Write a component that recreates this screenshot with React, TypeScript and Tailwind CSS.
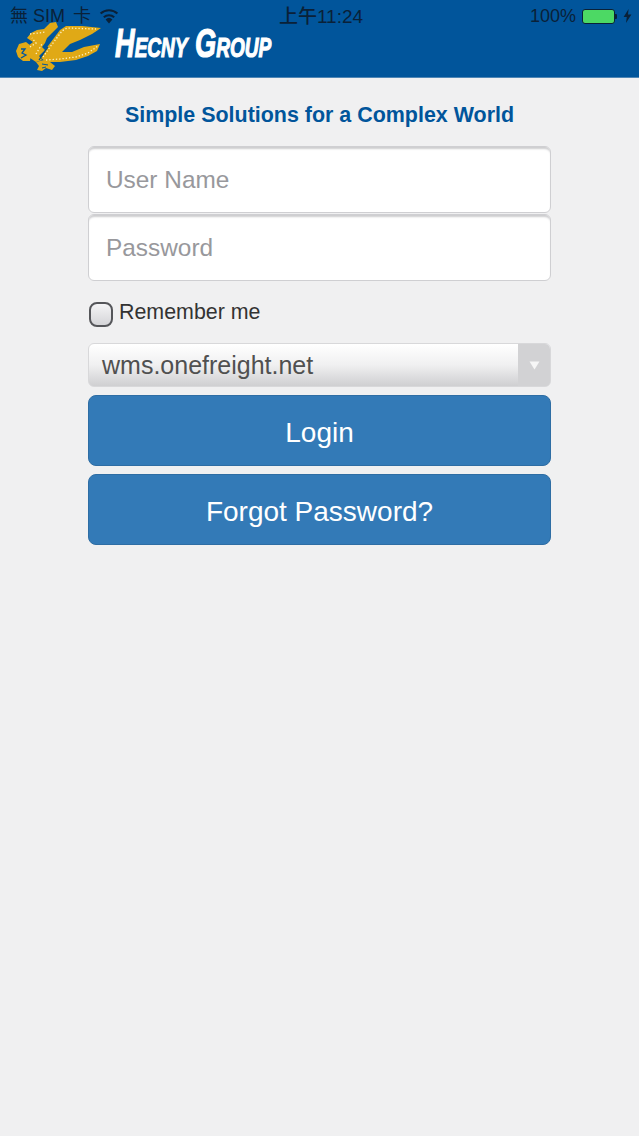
import React from 'react';

const sans = 'font-["Liberation_Sans",Arial,"Noto_Sans_CJK_TC",sans-serif]';

// coordinates are page pixels, the svg sits at the header's top left corner
const DragonLogo = () => (
  <svg width="110" height="77" viewBox="0 0 110 77" className="absolute left-0 top-0">
    {/* head and neck */}
    <path
      d="M27 38 L31 33 L37 30 L44 29 L50 23 L56 22 L58 27 L52 33 L47 38 L45 43 L42 47 L45 50 L39 56 L42 60 L36 62 L30 58 L29 52 L24 50 L28 46 L33 42 Z"
      fill="#e0a916"
    />
    {/* left claw */}
    <path
      d="M19 44 L26 42 L31 46 L28 50 L31 54 L30 61 L23 61 L18 57 L16 51 Z"
      fill="#e0a916"
    />
    <path d="M21 49 L25 49 L22 53 L26 55 L21 58" fill="none" stroke="#01559b" strokeWidth="1.3" />
    {/* wing and tail */}
    <path
      d="M41 58 L48 46 L60 30 L66 26 L82 26 L101 28 L92 34 L80 40 L70 44 L62 52 L72 52 L84 47 L100 44 L97 51 L88 56 L76 60 L60 62 L46 62 Z"
      fill="#e0a916"
    />
    {/* bottom claw */}
    <path
      d="M36 62 L44 60 L50 62 L55 66 L52 70 L46 68 L42 71 L37 70 L39 66 Z"
      fill="#e0a916"
    />
    <path d="M42 64 L48 65 M42 68 L46 67" fill="none" stroke="#01559b" strokeWidth="1" />
    {/* bead outline */}
    <path
      d="M43 57 L50 47 L62 31 L67 28 L96 29 M46 60 L60 59 L76 57 L88 53 L98 46 M30 34 L46 32 M30 47 L36 43 L32 38 M36 54 L42 44"
      fill="none"
      stroke="#fff3c4"
      strokeWidth="1.3"
      strokeDasharray="1.3 2"
    />
    <path d="M39 60 L48 47" fill="none" stroke="#01467f" strokeWidth="1.2" />
  </svg>
);

const WifiIcon = () => (
  <svg width="20" height="15" viewBox="0 0 20 15" className="ml-[8px]">
    <path d="M10 14.5 L6.6 10.4 A5 5 0 0 1 13.4 10.4 Z" fill="#0a2138" />
    <path d="M4.8 8.2 A8 8 0 0 1 15.2 8.2" fill="none" stroke="#0a2138" strokeWidth="2.1" />
    <path d="M1.6 4.6 A12.4 12.4 0 0 1 18.4 4.6" fill="none" stroke="#0a2138" strokeWidth="2.1" />
  </svg>
);

const StatusBar = () => (
  <div className="absolute inset-x-0 top-0 flex h-[32px] items-center justify-between pl-[10px] pr-[7px] text-[18px] leading-none text-[#0a2138]">
    <div className="flex w-[200px] items-center">
      <span>無</span>
      <span className="ml-[5px]">SIM</span>
      <span className="ml-[8px]">卡</span>
      <WifiIcon />
    </div>
    <span className="text-[19px] font-medium">上午11:24</span>
    <div className="flex w-[200px] items-center justify-end">
      <span>100%</span>
      <div className="ml-[6px] h-[15px] w-[33px] rounded-[3px] border border-[#0a2138] bg-[#4cd964]" />
      <div className="h-[5px] w-[2px] rounded-r-[1px] bg-[#0a2138]" />
      <svg width="9" height="14" viewBox="0 0 9 14" className="ml-[6px]">
        <path d="M5.6 0 L0.6 8 L3.8 8 L3 14 L8.4 5.6 L5 5.6 Z" fill="#0a2138" />
      </svg>
    </div>
  </div>
);

const Header = () => (
  <header className="relative h-[78px] shrink-0 border-b border-[#4f86b5] bg-[#01559b]">
    <DragonLogo />
    <div className='absolute left-[115px] top-[20px] origin-left scale-x-[0.68] whitespace-nowrap font-["Liberation_Sans",sans-serif] text-[40px] font-bold italic leading-[46px] text-white [font-variant:small-caps] [-webkit-text-stroke:1.2px_white]'>
      Hecny Group
    </div>
    <StatusBar />
  </header>
);

const TextField = ({ label }: { label: string }) => (
  <div className="flex h-[67px] items-center rounded-[6px] border border-[#cfcfd2] bg-white pl-[17px] pt-px text-[24.4px] text-[#98989c] shadow-[inset_0_3px_2px_-1px_#cdcdcf]">
    {label}
  </div>
);

const ActionButton = ({ label }: { label: string }) => (
  <button className="flex h-[71px] w-full items-center justify-center rounded-[8px] border border-[#2e6da4] bg-[#337ab7] pt-[4px] text-[28px] text-white">
    {label}
  </button>
);

export default function App() {
  return (
    <div className={`flex min-h-[1136px] flex-col bg-[#f0f0f1] ${sans}`}>
      <Header />

      <main className="mx-auto flex w-[463px] flex-col">
        <h1 className="mt-[22px] text-center text-[21.45px] font-bold leading-[30px] whitespace-nowrap text-[#01559b]">
          Simple Solutions for a Complex World
        </h1>

        <div className="mt-[16px] flex flex-col gap-px">
          <TextField label="User Name" />
          <TextField label="Password" />
        </div>

        <label className="mt-[20px] flex h-[26px] items-start">
          <span className="mt-[1px] ml-px h-[25px] w-[24px] shrink-0 rounded-[8px] border-2 border-[#55565a] bg-gradient-to-b from-[#f4f4f6] to-[#d5d5d8]" />
          <span className="ml-[6px] text-[21.4px] leading-[22px] text-[#333]">Remember me</span>
        </label>

        <div className="mt-[16px] flex h-[44px] overflow-hidden rounded-[6px] border border-[#d8d8da] bg-gradient-to-b from-white via-[#f0f0f1] to-[#cfcfd1]">
          <span className="flex-1 pl-[13px] text-[25px] leading-[42px] text-[#505050]">wms.onefreight.net</span>
          <span className="flex w-[32px] items-center justify-center bg-[#d2d2d4]">
            <svg width="11" height="9" viewBox="0 0 11 9">
              <path d="M0.5 0.5 L10.5 0.5 L5.5 8.5 Z" fill="#f6f6f6" />
            </svg>
          </span>
        </div>

        <div className="mt-[8px] flex flex-col gap-[8px]">
          <ActionButton label="Login" />
          <ActionButton label="Forgot Password?" />
        </div>
      </main>
    </div>
  );
}
